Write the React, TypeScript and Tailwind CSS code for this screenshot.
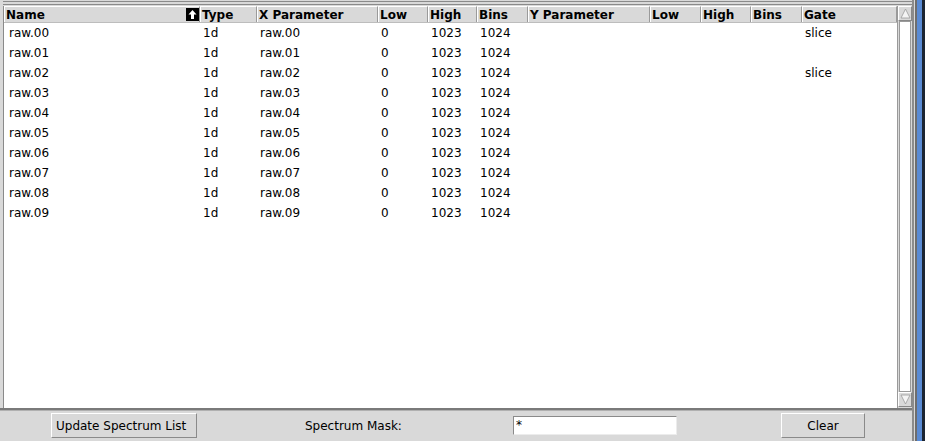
import React from "react";

const cols = [
  { key: "name", label: "Name", w: "w-[196px]" },
  { key: "type", label: "Type", w: "w-[57px]" },
  { key: "xp", label: "X Parameter", w: "w-[121px]" },
  { key: "xlow", label: "Low", w: "w-[50px]" },
  { key: "xhigh", label: "High", w: "w-[49px]" },
  { key: "xbins", label: "Bins", w: "w-[51px]" },
  { key: "yp", label: "Y Parameter", w: "w-[122px]" },
  { key: "ylow", label: "Low", w: "w-[51px]" },
  { key: "yhigh", label: "High", w: "w-[50px]" },
  { key: "ybins", label: "Bins", w: "w-[51px]" },
  { key: "gate", label: "Gate", w: "flex-1" },
];

const rows = Array.from({ length: 10 }, (_, i) => {
  const n = `raw.0${i}`;
  return {
    name: n,
    type: "1d",
    xp: n,
    xlow: "0",
    xhigh: "1023",
    xbins: "1024",
    yp: "",
    ylow: "",
    yhigh: "",
    ybins: "",
    gate: i === 0 || i === 2 ? "slice" : "",
  } as Record<string, string>;
});

const SortArrow = () => (
  <svg width="13" height="13" viewBox="0 0 13 13" className="shrink-0 -ml-[1px]">
    <rect width="13" height="13" fill="#000" />
    <path d="M6.5 2 L10.5 6.5 H8 V11 H5 V6.5 H2.5 Z" fill="#fff" />
  </svg>
);

export default function App() {
  return (
    <div
      className="w-[925px] h-[441px] flex bg-[#d9d9d9] overflow-hidden text-[12px] text-black"
      style={{ fontFamily: '"DejaVu Sans", sans-serif' }}
    >
      <div className="flex-1 flex flex-col">
        {/* top double line */}
        <div className="h-[6px] flex flex-col pt-[1px] pl-[3px]">
          <div className="h-[1px] bg-[#8a8a8a]" />
          <div className="h-[2px]" />
          <div className="h-[1px] bg-[#8a8a8a]" />
        </div>
        {/* table frame */}
        <div className="h-[404px] flex pl-[3px] border-b-[2px] border-[#7a7a7a]">
          <div className="flex-1 flex flex-col border-l border-[#8a8a8a] bg-white">
            <div className="h-[17px] flex bg-[#d9d9d9] border-b border-[#bdbdbd]">
              {cols.map((c) => (
                <div
                  key={c.key}
                  className={`${c.w} h-full flex items-center pl-[1px] font-bold border-l border-t border-white border-r border-r-[#9a9a9a] ${
                    c.key === "name" ? "justify-between" : ""
                  }`}
                >
                  <span>{c.label}</span>
                  {c.key === "name" && <SortArrow />}
                </div>
              ))}
            </div>
            <div className="flex-1 flex flex-col">
              {rows.map((r, i) => (
                <div key={i} className="h-[20px] flex items-center">
                  {cols.map((c) => (
                    <div
                      key={c.key}
                      className={`${c.w} ${
                        c.key === "name" ? "pl-[5px]" : "pl-[3px]"
                      } whitespace-nowrap`}
                    >
                      {r[c.key]}
                    </div>
                  ))}
                </div>
              ))}
            </div>
          </div>
          {/* scrollbar */}
          <div className="w-[15px] flex flex-col bg-[#d9d9d9] border-l border-[#9a9a9a] pb-[1px]">
            <div className="h-[15px] flex items-center justify-center border border-t-white border-l-white border-r-[#888] border-b-[#888] bg-[#d9d9d9]">
              <svg width="11" height="11" viewBox="0 0 11 11">
                <path d="M5.5 1 L10 10 H1 Z" fill="#f4f4f4" stroke="#9a9a9a" strokeWidth="0.8" />
              </svg>
            </div>
            <div className="flex-1 bg-white border border-[#9a9a9a] mx-[1px]" />
            <div className="h-[15px] flex items-center justify-center border border-t-white border-l-white border-r-[#888] border-b-[#888] bg-[#d9d9d9]">
              <svg width="11" height="11" viewBox="0 0 11 11">
                <path d="M5.5 10 L10 1 H1 Z" fill="#f4f4f4" stroke="#9a9a9a" strokeWidth="0.8" />
              </svg>
            </div>
          </div>
        </div>
        {/* bottom bar */}
        <div className="flex-1 flex items-center border-t border-[#b0b0b0] pb-[1px]">
          <button className="ml-[51px] w-[146px] h-[25px] bg-[#d9d9d9] border border-t-white border-l-white border-r-[#8a8a8a] border-b-[#8a8a8a] text-[12px] text-left pl-[4px]">
            Update Spectrum List
          </button>
          <span className="ml-[108px] w-[208px]">Spectrum Mask:</span>
          <div className="w-[164px] h-[19px] bg-white border border-t-[#8a8a8a] border-l-[#8a8a8a] border-r-[#ececec] border-b-[#ececec] pl-[2px] leading-[17px] text-[12px]">
            *
          </div>
          <button className="ml-[104px] w-[84px] h-[25px] bg-[#d9d9d9] border border-t-white border-l-white border-r-[#8a8a8a] border-b-[#8a8a8a] text-[12px] text-center">
            Clear
          </button>
        </div>
      </div>
      {/* window edge */}
      <div className="w-[13px] flex h-full">
        <div className="w-[2px] bg-[#8c8c8c]" />
        <div className="w-[1px] bg-[#d9d9d9]" />
        <div className="w-[2px] bg-[#6e6e6e]" />
        <div className="w-[5px] bg-[#5a8bd4]" />
        <div className="w-[3px] bg-[#1c2533]" />
      </div>
    </div>
  );
}
